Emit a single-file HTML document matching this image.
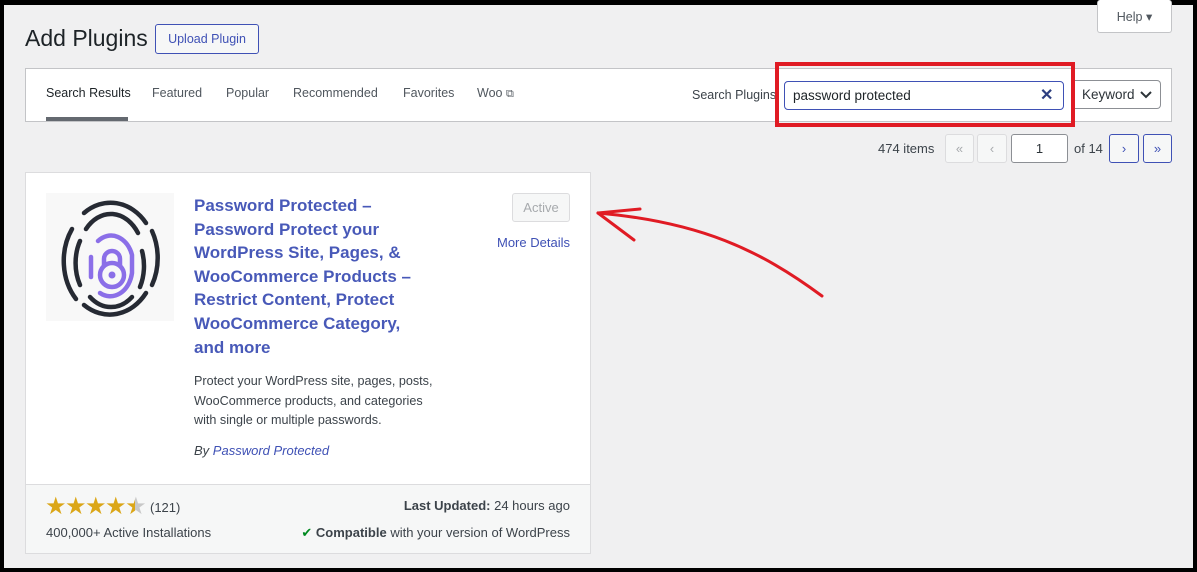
<!DOCTYPE html>
<html><head><meta charset="utf-8"><style>
*{margin:0;padding:0;box-sizing:border-box}
body{width:1197px;height:572px;background:#000;position:relative;overflow:hidden;font-family:"Liberation Sans",sans-serif;color:#3c434a;font-size:13px}
.pg{position:absolute;left:4px;top:5px;width:1189px;height:563px;background:#f0f0f1}
.a{position:absolute;white-space:nowrap}
.btn{position:absolute;border:1px solid #c3c4c7;border-radius:3px;background:#f6f7f7;text-align:center}
.bl{border-color:#3f51b5;color:#3f51b5;background:#f6f7f7}
a{color:#3f51b5;text-decoration:none}
.nv{font-size:12.5px;color:#50575e}
</style></head><body>
<div class="pg"></div>
<div class="a" style="left:25px;top:25px;font-size:23px;color:#1d2327">Add Plugins</div>
<div class="btn bl" style="left:155px;top:24px;width:104px;height:30px;line-height:28px;font-size:12.5px">Upload Plugin</div>
<div class="btn" style="left:1097px;top:0;width:75px;height:33px;line-height:34px;background:#fff;border-top:none;color:#50575e;font-size:12.5px">Help ▾</div>

<div class="a" style="left:25px;top:68px;width:1147px;height:54px;background:#fff;border:1px solid #c3c4c7"></div>
<div class="a nv" style="left:46px;top:86px;color:#1d2327">Search Results</div>
<div class="a" style="left:46px;top:117px;width:82px;height:4px;background:#646970"></div>
<div class="a nv" style="left:152px;top:86px">Featured</div>
<div class="a nv" style="left:226px;top:86px">Popular</div>
<div class="a nv" style="left:293px;top:86px">Recommended</div>
<div class="a nv" style="left:403px;top:86px">Favorites</div>
<div class="a nv" style="left:477px;top:86px">Woo <span style="font-size:11px">⧉</span></div>
<div class="a nv" style="left:692px;top:88px;color:#3c434a">Search Plugins</div>
<div class="a" style="left:775px;top:62px;width:300px;height:65px;border:4px solid #e01b24"></div>
<div class="a" style="left:784px;top:81px;width:280px;height:29px;border:1.5px solid #3f51b5;border-radius:4px;background:#fff"></div>
<div class="a" style="left:793px;top:88px;font-size:13.5px;color:#1d2327">password protected</div>
<div class="a" style="left:1040px;top:85px;font-size:16px;font-weight:bold;color:#2c3e80">✕</div>
<div class="a" style="left:1075px;top:80px;width:86px;height:29px;border:1px solid #8c8f94;border-left:none;border-radius:0 4px 4px 0;background:#fff"></div>
<div class="a" style="left:1082px;top:87px;font-size:13.5px;color:#2c3338">Keyword</div>
<svg class="a" style="left:1139px;top:90px" width="14" height="10"><path d="M2 2l5 5 5-5" stroke="#2c3338" stroke-width="2" fill="none"/></svg>

<div class="a" style="left:878px;top:141px;color:#3c434a">474 items</div>
<div class="btn" style="left:945px;top:134px;width:29px;height:29px;line-height:27px;color:#a7aaad;border-color:#dcdcde">«</div>
<div class="btn" style="left:977px;top:134px;width:30px;height:29px;line-height:27px;color:#a7aaad;border-color:#dcdcde">‹</div>
<div class="btn" style="left:1011px;top:134px;width:57px;height:29px;line-height:27px;background:#fff;border-color:#8c8f94;color:#2c3338">1</div>
<div class="a" style="left:1074px;top:141px">of 14</div>
<div class="btn bl" style="left:1109px;top:134px;width:30px;height:29px;line-height:27px">›</div>
<div class="btn bl" style="left:1143px;top:134px;width:29px;height:29px;line-height:27px">»</div>

<div class="a" style="left:25px;top:172px;width:566px;height:382px;background:#fff;border:1px solid #dcdcde"></div>
<div class="a" style="left:26px;top:484px;width:564px;height:69px;background:#f6f7f7;border-top:1px solid #dcdcde"></div>
<svg class="a" style="left:46px;top:193px" width="128" height="128" viewBox="0 0 128 128">
<rect width="128" height="128" fill="#f8f8f8"/>
<g fill="none" stroke="#262a33" stroke-width="4.5" stroke-linecap="round">
<path d="M38 20 A46 56 0 0 1 100 30"/><path d="M106 38 A46 56 0 0 1 106 92"/><path d="M100 100 A46 56 0 0 1 38 112"/><path d="M30 106 A46 56 0 0 1 26 36"/>
<path d="M40 36 A33 44 0 0 1 92 40"/><path d="M96 58 A33 44 0 0 1 94 94"/><path d="M86 104 A33 44 0 0 1 44 104"/><path d="M34 92 A33 44 0 0 1 34 48"/>
</g>
<g fill="none" stroke="#8b6fe8" stroke-width="4.5" stroke-linecap="round">
<path d="M52 48 A22 28 0 0 1 86 62 V80 A22 28 0 0 1 54 100"/><path d="M45 64 V84"/>
<circle cx="66" cy="82" r="12"/><path d="M58 72 V66 A8 8 0 0 1 74 66 V72"/>
</g>
<circle cx="66" cy="82" r="3.5" fill="#8b6fe8"/>
</svg>
<div class="a" style="left:194px;top:194px;font-size:17px;font-weight:bold;line-height:23.6px;color:#3f51b5;opacity:.95">Password Protected –<br>Password Protect your<br>WordPress Site, Pages, &amp;<br>WooCommerce Products –<br>Restrict Content, Protect<br>WooCommerce Category,<br>and more</div>
<div class="btn" style="left:512px;top:193px;width:58px;height:29px;line-height:27px;color:#a7aaad;border-color:#dcdcde">Active</div>
<div class="a" style="left:497px;top:235px"><a>More Details</a></div>
<div class="a" style="left:194px;top:372px;line-height:19.5px;font-size:12.6px;color:#3c434a">Protect your WordPress site, pages, posts,<br>WooCommerce products, and categories<br>with single or multiple passwords.</div>
<div class="a" style="left:194px;top:443px;font-style:italic;color:#3c434a">By <a>Password Protected</a></div>
<div class="a" style="left:45px;top:492px;font-size:24px;color:#dba617;letter-spacing:-1.5px">★★★★<span style="background:linear-gradient(90deg,#dba617 50%,#c8c8c8 50%);-webkit-background-clip:text;color:transparent">★</span></div>
<div class="a" style="left:150px;top:500px;color:#3c434a">(121)</div>
<div class="a" style="left:46px;top:525px;color:#3c434a">400,000+ Active Installations</div>
<div class="a" style="right:627px;top:498px;color:#3c434a"><b>Last Updated:</b> 24 hours ago</div>
<div class="a" style="right:627px;top:525px;color:#3c434a"><span style="color:#008a20">✔</span> <b>Compatible</b> with your version of WordPress</div>

<svg class="a" style="left:0;top:0" width="1197" height="572">
<g fill="none" stroke="#e01b24" stroke-width="3" stroke-linecap="round">
<path d="M822 296 C760 250 700 222 598 213"/>
<path d="M598 213 L640 209"/><path d="M598 213 L634 240"/>
</g>
</svg>
</body></html>
